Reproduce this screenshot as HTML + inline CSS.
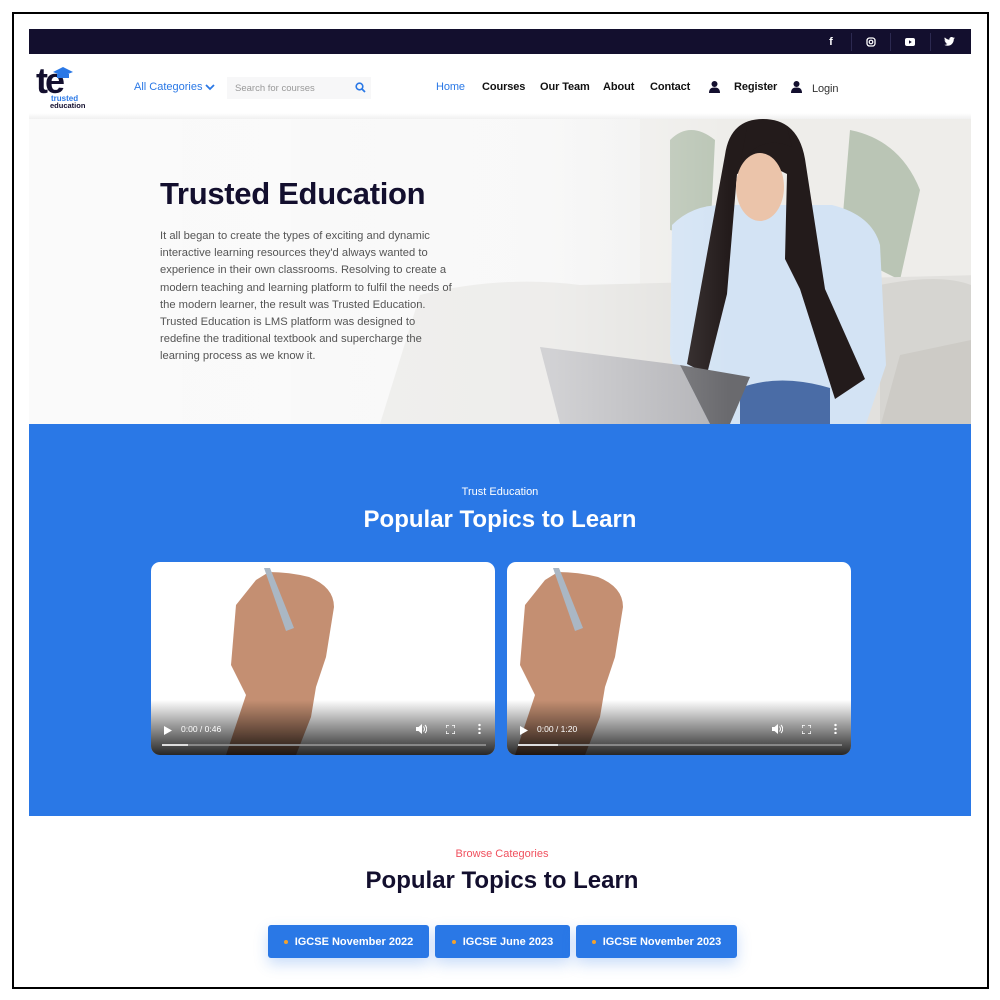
<!DOCTYPE html>
<html><head><meta charset="utf-8">
<style>
*{margin:0;padding:0;box-sizing:border-box}
body{width:1000px;height:1000px;background:#fff;font-family:"Liberation Sans",sans-serif;position:relative;overflow:hidden}
.frame{position:absolute;left:12px;top:12px;width:977px;height:977px;border:2px solid #000}
.top{position:absolute;left:29px;top:29px;width:942px;height:25px;background:#130f2e}
.soc{position:absolute;top:0;height:25px;width:40px;color:#fff;font-size:11px;font-weight:bold;display:flex;align-items:center;justify-content:center}
.sep{position:absolute;top:4px;width:1px;height:18px;background:#2c2950}
.nav{position:absolute;top:81px;font-size:11px;color:#111;font-weight:bold;letter-spacing:-.1px}
.hero{position:absolute;left:29px;top:119px;width:942px;height:305px;overflow:hidden}
.blue{position:absolute;left:29px;top:424px;width:942px;height:392px;background:#2a78e6}
.vid{position:absolute;top:562px;width:344px;height:193px;border-radius:9px;background:#fff;overflow:hidden}
.ctl{position:absolute;left:0;bottom:0;width:100%;height:55px;background:linear-gradient(rgba(0,0,0,0),rgba(0,0,0,.85))}
.btn{position:absolute;top:925px;height:33px;background:#2a78e6;color:#fff;font-weight:bold;font-size:11px;border-radius:3px;display:flex;align-items:center;justify-content:center;box-shadow:0 6px 14px rgba(42,120,230,.25)}
.btn:before{content:"";width:4px;height:4px;border-radius:50%;background:#f2a12e;margin-right:7px}
</style></head><body>
<div class="frame"></div>
<div class="top">
<div class="soc" style="left:782px">f</div><div class="sep" style="left:822px"></div>
<div class="soc" style="left:822px"><svg width="10" height="10" viewBox="0 0 10 10"><rect x="1" y="1" width="8" height="8" rx="2.5" fill="none" stroke="#fff" stroke-width="1.3"/><circle cx="5" cy="5" r="1.8" fill="none" stroke="#fff" stroke-width="1.2"/></svg></div><div class="sep" style="left:861px"></div>
<div class="soc" style="left:861px"><svg width="10" height="8" viewBox="0 0 10 8"><rect width="10" height="8" rx="2" fill="#fff"/><path d="M4 2.3L6.8 4 4 5.7z" fill="#130f2e"/></svg></div><div class="sep" style="left:901px"></div>
<div class="soc" style="left:900px"><svg width="11" height="9" viewBox="0 0 24 20"><path d="M24 2.4a10 10 0 0 1-2.8.8A5 5 0 0 0 23.3.4a10 10 0 0 1-3.1 1.2A4.9 4.9 0 0 0 11.8 6 14 14 0 0 1 1.7.9a4.9 4.9 0 0 0 1.5 6.6A5 5 0 0 1 1 6.9a4.9 4.9 0 0 0 3.9 4.8 5 5 0 0 1-2.2.1 4.9 4.9 0 0 0 4.6 3.4A9.9 9.9 0 0 1 0 17.3 14 14 0 0 0 7.5 19.5c9 0 14-7.5 14-14v-.6A10 10 0 0 0 24 2.4z" fill="#fff"/></svg></div>
</div>
<!-- logo -->
<div style="position:absolute;left:36px;top:63px;font-size:36px;font-weight:bold;color:#130f2e;letter-spacing:-3px;line-height:36px">te</div>
<svg style="position:absolute;left:52px;top:67px" width="22" height="12" viewBox="0 0 22 12"><path d="M1 5L11 0 21 5 11 9z" fill="#2a78e6"/><path d="M5 7v4h12V7" fill="#2a78e6"/></svg>
<div style="position:absolute;left:51px;top:95px;font-size:8px;font-weight:bold;color:#2a78e6;line-height:8px">trusted</div>
<div style="position:absolute;left:50px;top:102px;font-size:7.5px;font-weight:bold;color:#130f2e;line-height:8px">education</div>
<svg style="position:absolute;left:205px;top:84px" width="10" height="7" viewBox="0 0 10 7"><path d="M1 1l4 4 4-4" stroke="#2a78e6" stroke-width="1.8" fill="none"/></svg>
<div style="position:absolute;left:227px;top:77px;width:144px;height:22px;background:#f7f7f8"></div>
<div style="position:absolute;left:235px;top:83px;font-size:9.5px;color:#999">Search for courses</div>
<svg style="position:absolute;left:355px;top:82px" width="11" height="11" viewBox="0 0 11 11"><circle cx="4.5" cy="4.5" r="3.3" stroke="#2a78e6" stroke-width="1.6" fill="none"/><path d="M7 7l3 3" stroke="#2a78e6" stroke-width="1.8"/></svg>
<div style="position:absolute;left:134px;top:81px;font-size:11px;color:#2a78e6">All Categories</div>
<div class="nav" style="left:436px;color:#2a78e6;font-weight:normal">Home</div>
<div class="nav" style="left:482px">Courses</div>
<div class="nav" style="left:540px">Our Team</div>
<div class="nav" style="left:603px">About</div>
<div class="nav" style="left:650px">Contact</div>
<svg style="position:absolute;left:709px;top:81px" width="11" height="12" viewBox="0 0 11 12"><circle cx="5.5" cy="3" r="3" fill="#130f2e"/><path d="M0 12c0-4 2-5.5 5.5-5.5S11 8 11 12z" fill="#130f2e"/></svg>
<div class="nav" style="left:734px">Register</div>
<svg style="position:absolute;left:791px;top:81px" width="11" height="12" viewBox="0 0 11 12"><circle cx="5.5" cy="3" r="3" fill="#130f2e"/><path d="M0 12c0-4 2-5.5 5.5-5.5S11 8 11 12z" fill="#130f2e"/></svg>
<div class="nav" style="left:812px;top:83px;font-weight:normal;color:#333">Login</div>
<div style="position:absolute;left:29px;top:113px;width:942px;height:6px;background:linear-gradient(#fff,#f0f0f0)"></div>

<div class="hero">
<svg width="942" height="305" viewBox="29 119 942 305" style="position:absolute;left:0;top:0">
<defs>
<linearGradient id="bg" x1="0" x2="1"><stop offset="0" stop-color="#f3f3f3"/><stop offset=".5" stop-color="#f4f4f4"/><stop offset="1" stop-color="#e8e8e6"/></linearGradient>
<linearGradient id="ov" x1="0" x2="1"><stop offset="0" stop-color="#fff" stop-opacity=".6"/><stop offset=".75" stop-color="#fff" stop-opacity=".4"/><stop offset="1" stop-color="#fff" stop-opacity="0"/></linearGradient>
</defs>
<rect x="29" y="119" width="942" height="305" fill="url(#bg)"/>
<rect x="640" y="119" width="331" height="180" fill="#eeedea"/>
<path d="M670 140q20-20 45 0l-5 100-40-10zM850 130q50 10 70 60l-20 90-60-30z" fill="#7b9475" opacity=".45"/>
<path d="M420 295q80-20 160-10l400-10v149H380z" fill="#e2e1de"/>
<path d="M880 285q60-12 91 0v139h-91z" fill="#d6d5d1"/>
<path d="M900 355l71-15v84h-90z" fill="#cdcbc6"/>
<path d="M672 225q20-20 50-20h110q40 10 48 40l6 120-20 59H690l-20-70z" fill="#d3e3f4"/>
<path d="M725 155q5-36 38-36 35 0 42 40l20 130 40 90-30 20-35-110-15-30 2-85-20-10-30 10-10 120-20 80-20-10 20-110z" fill="#231b1b"/>
<ellipse cx="760" cy="187" rx="24" ry="34" fill="#ebc4aa"/>
<path d="M740 165q20-32 52-18l-5-20-40 0z" fill="#231b1b"/>
<path d="M740 388q40-15 90 0v36h-90z" fill="#4a6ca6"/>
<path d="M540 347l140 18 30 59H560z" fill="#b3b3b7"/>
<path d="M680 365l70 12-20 47h-20z" fill="#6a6a6e"/>
<rect x="29" y="119" width="700" height="305" fill="url(#ov)"/>
</svg>
</div>
<div style="position:absolute;left:160px;top:176px;font-size:31px;font-weight:bold;color:#130f2e;letter-spacing:-.3px">Trusted Education</div>
<div style="position:absolute;left:160px;top:228px;width:294px;font-size:11.2px;line-height:17.2px;color:#555">It all began to create the types of exciting and dynamic interactive learning resources they'd always wanted to experience in their own classrooms. Resolving to create a modern teaching and learning platform to fulfil the needs of the modern learner, the result was Trusted Education. Trusted Education is LMS platform was designed to redefine the traditional textbook and supercharge the learning process as we know it.</div>

<div class="blue"></div>
<div style="position:absolute;left:0;width:1000px;top:486px;text-align:center;color:#fff;font-size:11px">Trust Education</div>
<div style="position:absolute;left:0;width:1000px;top:506px;text-align:center;color:#fff;font-size:24px;font-weight:bold">Popular Topics to Learn</div>

<div class="vid" style="left:151px">
<svg width="344" height="193" style="position:absolute;left:0;top:0"><path d="M118 10q20 0 40 5 25 10 25 30l-8 50-10 30-5 30-15 38H75l20-60-15-30 5-60 20-25z" fill="#c48f72"/><path d="M113 6l6 0 24 60-8 3z" fill="#aab7c4"/></svg>
<div class="ctl"></div>
<svg style="position:absolute;left:13px;top:164px" width="8" height="9"><path d="M0 0l8 4.5L0 9z" fill="#fff"/></svg>
<div style="position:absolute;left:30px;top:162px;color:#fff;font-size:8.5px">0:00 / 0:46</div>
<svg style="position:absolute;left:265px;top:162px" width="11" height="10" viewBox="0 0 11 10"><path d="M0 3h2.5L6 0v10L2.5 7H0z" fill="#fff"/><path d="M7.5 2.5q2 2.5 0 5M9 1q3.5 4 0 8" stroke="#fff" fill="none"/></svg>
<svg style="position:absolute;left:295px;top:163px" width="9" height="9"><path d="M0 3V0h3M6 0h3v3M9 6v3H6M3 9H0V6" stroke="#fff" fill="none" stroke-width="1.4"/></svg>
<div style="position:absolute;left:327px;top:161px;width:3px;height:11px;background:radial-gradient(circle,#fff 1.2px,transparent 1.3px) 0 0/3px 4px"></div>
<div style="position:absolute;left:11px;top:182px;width:324px;height:2px;background:#888"></div>
<div style="position:absolute;left:11px;top:182px;width:26px;height:2px;background:#ddd"></div>
</div>
<div class="vid" style="left:507px">
<svg width="344" height="193" style="position:absolute;left:0;top:0"><path d="M51 10q20 0 40 5 25 10 25 30l-8 50-10 30-5 30-15 38H8l20-60-15-30 5-60 20-25z" fill="#c48f72"/><path d="M46 6l6 0 24 60-8 3z" fill="#aab7c4"/></svg>
<div class="ctl"></div>
<svg style="position:absolute;left:13px;top:164px" width="8" height="9"><path d="M0 0l8 4.5L0 9z" fill="#fff"/></svg>
<div style="position:absolute;left:30px;top:162px;color:#fff;font-size:8.5px">0:00 / 1:20</div>
<svg style="position:absolute;left:265px;top:162px" width="11" height="10" viewBox="0 0 11 10"><path d="M0 3h2.5L6 0v10L2.5 7H0z" fill="#fff"/><path d="M7.5 2.5q2 2.5 0 5M9 1q3.5 4 0 8" stroke="#fff" fill="none"/></svg>
<svg style="position:absolute;left:295px;top:163px" width="9" height="9"><path d="M0 3V0h3M6 0h3v3M9 6v3H6M3 9H0V6" stroke="#fff" fill="none" stroke-width="1.4"/></svg>
<div style="position:absolute;left:327px;top:161px;width:3px;height:11px;background:radial-gradient(circle,#fff 1.2px,transparent 1.3px) 0 0/3px 4px"></div>
<div style="position:absolute;left:11px;top:182px;width:324px;height:2px;background:#888"></div>
<div style="position:absolute;left:11px;top:182px;width:40px;height:2px;background:#ddd"></div>
</div>

<div style="position:absolute;left:0;width:1004px;top:848px;text-align:center;color:#f0505e;font-size:11px">Browse Categories</div>
<div style="position:absolute;left:0;width:1004px;top:867px;text-align:center;color:#130f2e;font-size:24px;font-weight:bold">Popular Topics to Learn</div>
<div class="btn" style="left:268px;width:161px">IGCSE November 2022</div>
<div class="btn" style="left:435px;width:135px">IGCSE June 2023</div>
<div class="btn" style="left:576px;width:161px">IGCSE November 2023</div>
</body></html>
